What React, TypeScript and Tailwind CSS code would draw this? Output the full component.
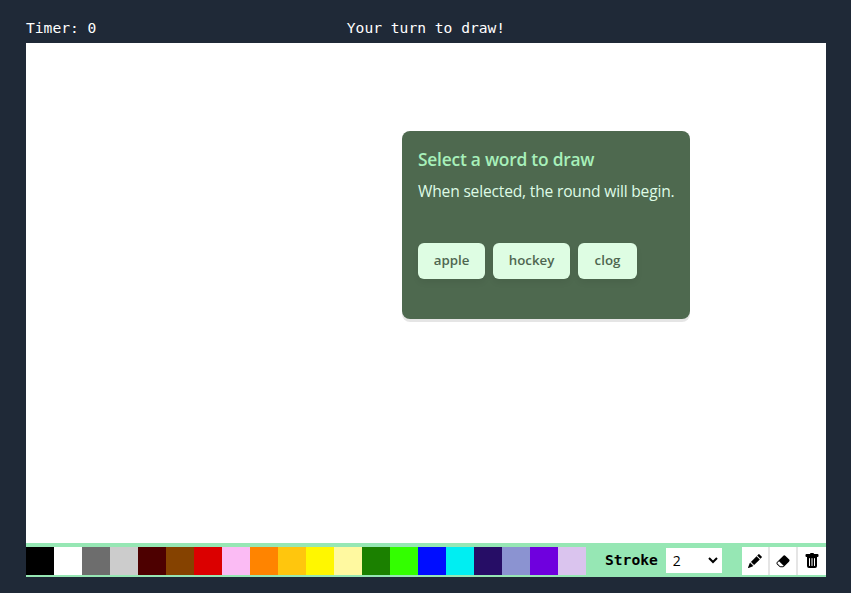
import { BsPencilFill, BsEraserFill, BsTrashFill } from "react-icons/bs";

const colors = [
  "bg-[#000000]", "bg-[#ffffff]", "bg-[#6d6d6d]", "bg-[#cccccc]", "bg-[#4d0000]",
  "bg-[#854200]", "bg-[#db0000]", "bg-[#fbbbf4]", "bg-[#ff8400]", "bg-[#ffc60d]",
  "bg-[#fff700]", "bg-[#fff9a0]", "bg-[#1b8000]", "bg-[#33ff00]", "bg-[#000dff]",
  "bg-[#00eef2]", "bg-[#260d66]", "bg-[#8b93d1]", "bg-[#6f00de]", "bg-[#dac4ee]",
];

const words = [
  { text: "apple", size: "w-[67px]" },
  { text: "hockey", size: "w-[77px]" },
  { text: "clog", size: "w-[59px]" },
];

function StatusBar() {
  return (
    <header className="grid h-[43px] grid-cols-3 pt-[18px] font-['DejaVu_Sans_Mono',monospace] text-[14.62px] leading-5 text-white">
      <span>Timer: 0</span>
      <span className="text-center">Your turn to draw!</span>
    </header>
  );
}

function WordCard() {
  return (
    <section className="ml-[376px] h-[188px] w-[288px] rounded-lg bg-[#4e694f] px-4 pt-4 font-['Open_Sans','Noto_Sans',sans-serif] shadow-[0_3px_0_rgba(0,0,0,0.1)]">
      <h2 className="w-max text-[17.4px] leading-6 font-semibold tracking-[-0.24px] text-[#a7f0ba]">Select a word to draw</h2>
      <p className="mt-2 w-max text-[15.6px] leading-6 tracking-[-0.19px] text-[#defbe6]">When selected, the round will begin.</p>
      <div className="mt-10 flex gap-2">
        {words.map((word) => (
          <button
            key={word.text}
            className={`${word.size} h-9 rounded-md bg-[#defde3] text-[13.3px] font-semibold text-[#4f6650] shadow-[0_4px_6px_rgba(0,0,0,0.06)]`}
          >
            {word.text}
          </button>
        ))}
      </div>
    </section>
  );
}

function Toolbar() {
  return (
    <footer className="flex h-[34px] items-start bg-[#96e7b4] pt-1">
      <div className="flex">
        {colors.map((color) => (
          <button key={color} className={`${color} size-7`} />
        ))}
      </div>
      <label className="ml-[19px] flex items-center font-['DejaVu_Sans_Mono',monospace] text-[14.62px] leading-[26px] font-bold text-black">
        Stroke
        <span className="relative ml-2 block h-[25px] w-14">
          <select className="block h-[25px] w-14 appearance-none bg-white pl-[7px] font-['Open_Sans',sans-serif] text-sm leading-[25px] font-normal text-black">
            <option>2</option>
          </select>
          <svg className="pointer-events-none absolute top-[9px] right-[4px]" width="10" height="7" viewBox="0 0 10 7" fill="none" stroke="#000" strokeWidth="2">
            <path d="M1 1l4 4 4-4" />
          </svg>
        </span>
      </label>
      <div className="ml-auto flex gap-0.5 bg-[#e5e5e5] text-black">
        <button className="flex h-7 w-[26px] items-center justify-center bg-white"><BsPencilFill size={14} /></button>
        <button className="flex h-7 w-[26px] items-center justify-center bg-white"><BsEraserFill size={14} /></button>
        <button className="flex h-7 w-7 items-center justify-center bg-white"><BsTrashFill size={16} /></button>
      </div>
    </footer>
  );
}

export default function App() {
  return (
    <div className="h-screen overflow-hidden bg-[#1f2937] pr-[25px] pl-[26px]">
      <StatusBar />
      <main className="h-[500px] bg-white pt-[88px]">
        <WordCard />
      </main>
      <Toolbar />
    </div>
  );
}
